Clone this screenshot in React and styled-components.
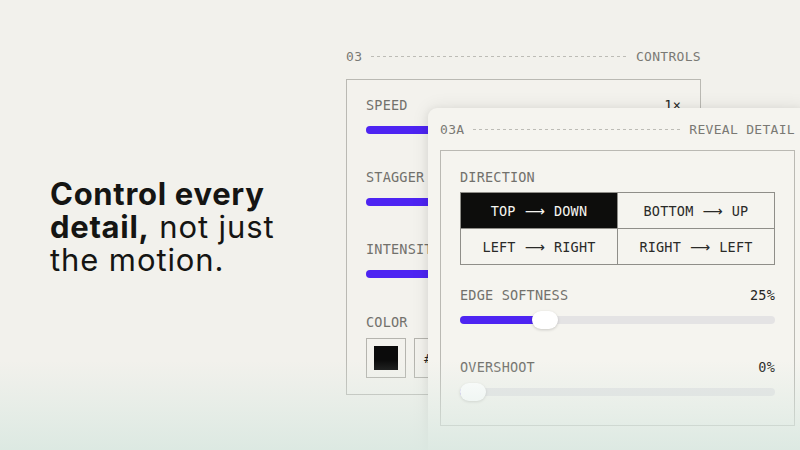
import React from "react";
import styled, { createGlobalStyle } from "styled-components";

const Global = createGlobalStyle`
  html, body { margin: 0; padding: 0; background: #f2f1ec; }
  #root { width: 800px; height: 450px; }
`;

const MONO = `"DejaVu Sans Mono", "Liberation Mono", monospace`;

const Stage = styled.div`
  position: relative;
  width: 800px;
  height: 450px;
  overflow: hidden;
  display: flex;
  background: #f2f1ec;
`;

const Left = styled.div`
  flex: none;
  width: 296px;
  padding-left: 50px;
  display: flex;
  align-items: center;
`;

const Headline = styled.h1`
  margin: 0;
  font-family: Inter, "Liberation Sans", sans-serif;
  font-size: 31px;
  line-height: 33px;
  font-weight: 400;
  color: #151513;
  letter-spacing: 0.9px;
  padding-top: 2px;
  b { font-weight: 700; letter-spacing: 0.7px; }
`;

const Right = styled.div`
  flex: none;
  width: 355px;
  padding-top: 47px;
  display: flex;
  flex-direction: column;
`;

const PanelHeader = styled.div`
  display: flex;
  align-items: center;
  height: 18px;
  font-family: ${MONO};
  font-size: 13px;
  color: #7a7974;
  letter-spacing: 0.3px;
`;

const Dashes = styled.span`
  flex: 1;
  height: 1px;
  margin: 0 9px;
  background: repeating-linear-gradient(to right, #bdbcb6 0 3px, transparent 3px 6px);
`;

const Box = styled.div`
  margin-top: ${(p) => p.$gap}px;
  border: 1px solid #bab9b3;
  padding: ${(p) => p.$pad};
  display: flex;
  flex-direction: column;
  background: ${(p) => p.$bg};
`;

const Group = styled.div`
  display: flex;
  flex-direction: column;
  margin-bottom: ${(p) => p.$mb || 0}px;
`;

const LabelRow = styled.div`
  display: flex;
  justify-content: space-between;
  align-items: center;
  height: 16px;
  font-family: ${MONO};
  font-size: 13.5px;
  color: #72716c;
  letter-spacing: 0.2px;
  white-space: nowrap;
`;

const Value = styled.span`
  color: #262624;
`;

const Track = styled.div`
  position: relative;
  margin-top: ${(p) => p.$mt}px;
  height: 8px;
  border-radius: 4px;
  background: #e4e3e4;
`;

const Fill = styled.div`
  height: 100%;
  border-radius: 4px;
  background: #4d24f2;
`;

const Thumb = styled.div`
  position: absolute;
  top: -5px;
  width: 26px;
  height: 18px;
  border-radius: 9px;
  background: #ffffff;
  box-shadow: 0 1px 3px rgba(0, 0, 0, 0.18);
`;

const Swatches = styled.div`
  display: flex;
  gap: 8px;
  margin-top: 8px;
`;

const SwatchBox = styled.div`
  width: 40px;
  height: 40px;
  box-sizing: border-box;
  border: 1px solid #b5b4ae;
  display: flex;
  align-items: center;
  justify-content: center;
`;

const SwatchFill = styled.div`
  width: 24px;
  height: 24px;
  background: #0b0b0b;
`;

const HexBox = styled.div`
  width: 120px;
  height: 40px;
  box-sizing: border-box;
  border: 1px solid #b5b4ae;
  display: flex;
  align-items: center;
  padding-left: 9px;
  font-family: ${MONO};
  font-size: 13px;
  color: #262624;
`;

const FrontCard = styled.div`
  position: absolute;
  left: 428px;
  top: 108px;
  width: 380px;
  height: 370px;
  box-sizing: border-box;
  padding: 12px 0 0 12px;
  border-radius: 9px;
  background: #f5f4ef;
  box-shadow: 0 0 18px rgba(0, 0, 0, 0.09), -2px 0 6px rgba(0, 0, 0, 0.04);
  display: flex;
  flex-direction: column;
`;

const CardInner = styled.div`
  width: 355px;
  display: flex;
  flex-direction: column;
`;

const Grid = styled.div`
  margin-top: 7px;
  display: grid;
  grid-template-columns: 1fr 1fr;
  grid-auto-rows: 36px;
  border: 1px solid #8f8e89;
  border-right: none;
  border-bottom: none;
`;

const Cell = styled.div`
  display: flex;
  align-items: center;
  justify-content: center;
  gap: 9px;
  border-right: 1px solid #8f8e89;
  border-bottom: 1px solid #8f8e89;
  font-family: ${MONO};
  font-size: 13.5px;
  letter-spacing: 0.2px;
  background: ${(p) => (p.$active ? "#0d0d0c" : "transparent")};
  color: ${(p) => (p.$active ? "#f6f5f0" : "#2a2a28")};
  white-space: nowrap;
`;

const Arrow = styled.span`
  font-family: "DejaVu Sans", "Noto Sans", sans-serif;
  font-size: 14px;
  line-height: 1;
`;

const Fade = styled.div`
  position: absolute;
  left: 0;
  right: 0;
  bottom: 0;
  height: 90px;
  pointer-events: none;
  background: linear-gradient(
    to bottom,
    rgba(219, 233, 226, 0) 0%,
    rgba(219, 233, 226, 0.45) 50%,
    rgba(218, 232, 225, 0.9) 100%
  );
`;

function Slider({ pct, mt, fill, thumb, width }) {
  const thumbLeft = (pct / 100) * (width - 26);
  return (
    <Track $mt={mt}>
      <Fill style={{ width: fill != null ? `${fill}%` : `${thumbLeft + 13}px` }} />
      {thumb && <Thumb style={{ left: `${thumbLeft}px` }} />}
    </Track>
  );
}

const directions = [
  ["TOP", "DOWN", true],
  ["BOTTOM", "UP", false],
  ["LEFT", "RIGHT", false],
  ["RIGHT", "LEFT", false],
];

export default function App() {
  return (
    <>
      <Global />
      <Stage>
        <Left>
          <Headline>
            <b>Control every</b>
            <br />
            <b>detail,</b> not just
            <br />
            the motion.
          </Headline>
        </Left>
        <Right>
          <PanelHeader>
            <span>03</span>
            <Dashes />
            <span>CONTROLS</span>
          </PanelHeader>
          <Box $gap={14} $pad="17px 19px 16px" $bg="#f3f2ed">
            <Group $mb={35}>
              <LabelRow>
                <span>SPEED</span>
                <Value>1×</Value>
              </LabelRow>
              <Slider mt={13} fill={45} width={315} />
            </Group>
            <Group $mb={35}>
              <LabelRow>
                <span>STAGGER</span>
              </LabelRow>
              <Slider mt={13} fill={40} width={315} />
            </Group>
            <Group $mb={36}>
              <LabelRow>
                <span>INTENSITY</span>
              </LabelRow>
              <Slider mt={13} fill={60} width={315} />
            </Group>
            <Group>
              <LabelRow>
                <span>COLOR</span>
              </LabelRow>
              <Swatches>
                <SwatchBox>
                  <SwatchFill />
                </SwatchBox>
                <HexBox>#</HexBox>
              </Swatches>
            </Group>
          </Box>
        </Right>
        <FrontCard>
          <CardInner>
            <PanelHeader>
              <span>03A</span>
              <Dashes />
              <span>REVEAL DETAIL</span>
            </PanelHeader>
            <Box $gap={12} $pad="18px 19px 29px" $bg="transparent">
              <Group $mb={22}>
                <LabelRow>
                  <span>DIRECTION</span>
                </LabelRow>
                <Grid>
                  {directions.map(([a, b, active]) => (
                    <Cell key={a + b} $active={active}>
                      <span>{a}</span>
                      <Arrow>⟶</Arrow>
                      <span>{b}</span>
                    </Cell>
                  ))}
                </Grid>
              </Group>
              <Group $mb={35}>
                <LabelRow>
                  <span>EDGE SOFTNESS</span>
                  <Value>25%</Value>
                </LabelRow>
                <Slider mt={13} pct={25} thumb width={315} />
              </Group>
              <Group>
                <LabelRow>
                  <span>OVERSHOOT</span>
                  <Value>0%</Value>
                </LabelRow>
                <Slider mt={13} pct={0} thumb width={315} />
              </Group>
            </Box>
          </CardInner>
        </FrontCard>
        <Fade />
      </Stage>
    </>
  );
}
